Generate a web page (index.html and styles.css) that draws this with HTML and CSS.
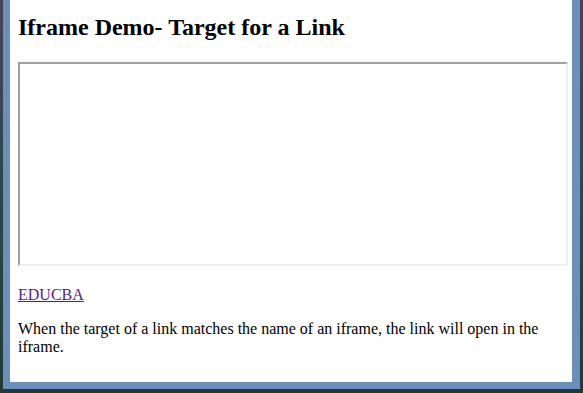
FILE: index.html
```html
<!DOCTYPE html>
<html lang="en">
<head>
    <meta charset="UTF-8">
    <meta name="viewport" content="width=device-width, initial-scale=1.0">
    <title>Iframe Demo</title>
    <link rel="stylesheet" href="styles.css">
</head>
<body>
    <div class="window">
        <div class="page">
            <h2>Iframe Demo- Target for a Link</h2>
            <div class="frame-row">
                <iframe class="target-frame" name="iframe_a" title="Iframe Example"></iframe>
            </div>
            <p><a href="#" target="iframe_a">EDUCBA</a></p>
            <p>When the target of a link matches the name of an iframe, the link will open in the iframe.</p>
        </div>
    </div>
</body>
</html>
```

FILE: styles.css
```css
html, body {
    margin: 0;
    height: 100%;
}
body {
    background: linear-gradient(180deg, #4a4256 0%, #2f4a4a 40%, #1f3b34 100%);
    overflow: hidden;
    font-family: "Liberation Serif", "Times New Roman", serif;
    font-size: 16px;
    color: #000;
}
.window {
    margin-left: 3px;
    width: 577px;
    height: 389px;
    box-sizing: border-box;
    background-color: #6a8fbb;
    padding: 0 8px 7px 7px;
}
.page {
    display: flow-root;
    background-color: #fff;
    height: 100%;
    padding: 0 8px;
}
h2 {
    font-size: 24px;
    font-weight: bold;
    margin: 14px 0 21px;
}
.target-frame {
    display: inline-block;
    width: 100%;
    height: 200px;
    border-style: solid;
    border-width: 2px;
    border-color: #a0a0a0 #eeeeee #eeeeee #a0a0a0;
    background-color: #fff;
    vertical-align: baseline;
}
p {
    margin: 16px 0;
}
a {
    color: #551a8b;
}
```
